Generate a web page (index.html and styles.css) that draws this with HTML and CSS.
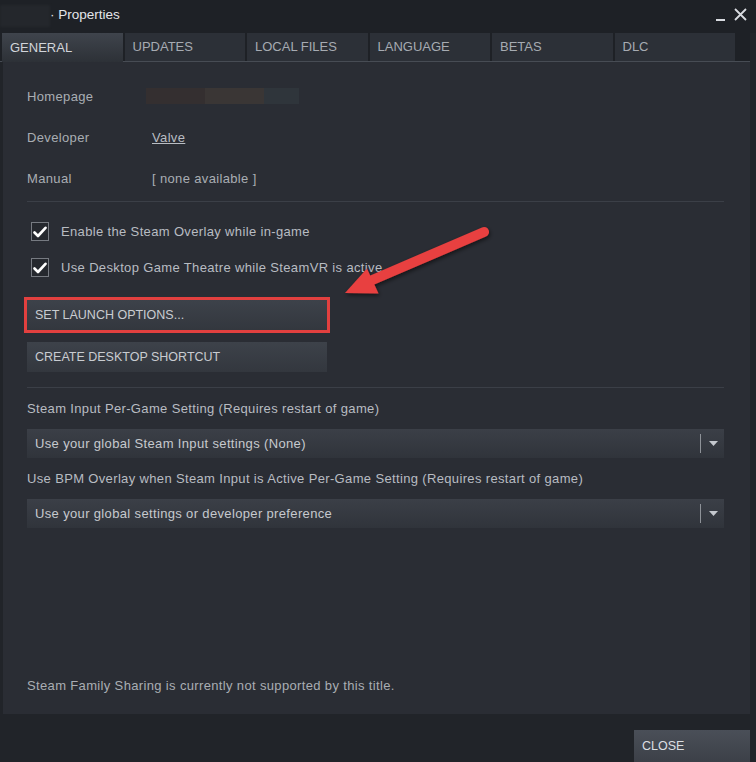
FILE: index.html
```html
<!DOCTYPE html>
<html lang="en">
<head>
<meta charset="utf-8">
<title>Properties</title>
<link rel="stylesheet" href="styles.css">
</head>
<body>
<div class="window">
  <div class="titlebar">
    <div class="game-name"></div>
    <span class="title">· Properties</span>
    <div class="controls">
      <span class="minimize"></span>
      <svg class="close-x" width="13" height="13" viewBox="0 0 13 13"><path d="M1 1 L12 12 M12 1 L1 12" stroke="#d8dbe0" stroke-width="1.8" fill="none"/></svg>
    </div>
  </div>
  <div class="tabs">
    <div class="tab active">GENERAL</div>
    <div class="tab">UPDATES</div>
    <div class="tab">LOCAL FILES</div>
    <div class="tab">LANGUAGE</div>
    <div class="tab">BETAS</div>
    <div class="tab">DLC</div>
  </div>
  <div class="panel">
    <div class="info">
      <div class="label">Homepage</div>
      <div class="value"><span class="blurred"><i class="b1"></i><i class="b2"></i><i class="b3"></i></span></div>
      <div class="label">Developer</div>
      <div class="value"><a class="link">Valve</a></div>
      <div class="label">Manual</div>
      <div class="value">[ none available ]</div>
    </div>
    <div class="sep"></div>
    <div class="checks">
      <label class="check-row"><span class="checkbox"><svg width="14" height="12" viewBox="0 0 14 12"><path d="M1.5 6.5 L5 10 L12.5 1.8" stroke="#ffffff" stroke-width="2.6" fill="none" stroke-linecap="round" stroke-linejoin="round"/></svg></span>Enable the Steam Overlay while in-game</label>
      <label class="check-row"><span class="checkbox"><svg width="14" height="12" viewBox="0 0 14 12"><path d="M1.5 6.5 L5 10 L12.5 1.8" stroke="#ffffff" stroke-width="2.6" fill="none" stroke-linecap="round" stroke-linejoin="round"/></svg></span>Use Desktop Game Theatre while SteamVR is active</label>
    </div>
    <div class="buttons">
      <div class="btn highlighted">SET LAUNCH OPTIONS...</div>
      <div class="btn">CREATE DESKTOP SHORTCUT</div>
    </div>
    <div class="sep sep2"></div>
    <div class="field-label">Steam Input Per-Game Setting (Requires restart of game)</div>
    <div class="dropdown"><span>Use your global Steam Input settings (None)</span><span class="dd-arrow"><i class="dd-bar"></i><svg width="9" height="5" viewBox="0 0 9 5"><path d="M0 0 H9 L4.5 5 Z" fill="#c4c8ce"/></svg></span></div>
    <div class="field-label">Use BPM Overlay when Steam Input is Active Per-Game Setting (Requires restart of game)</div>
    <div class="dropdown"><span>Use your global settings or developer preference</span><span class="dd-arrow"><i class="dd-bar"></i><svg width="9" height="5" viewBox="0 0 9 5"><path d="M0 0 H9 L4.5 5 Z" fill="#c4c8ce"/></svg></span></div>
    <div class="footer-note">Steam Family Sharing is currently not supported by this title.</div>
  </div>
  <div class="bottom">
    <div class="close-btn">CLOSE</div>
  </div>
  <svg class="annotation" width="756" height="762" viewBox="0 0 756 762">
    <defs>
      <filter id="shadow" x="-20%" y="-20%" width="140%" height="140%">
        <feDropShadow dx="1" dy="2" stdDeviation="2" flood-color="#000000" flood-opacity="0.55"/>
      </filter>
    </defs>
    <g filter="url(#shadow)">
      <line x1="484" y1="232" x2="370" y2="281" stroke="#e8403f" stroke-width="10" stroke-linecap="round"/>
      <polygon points="345,293 367,268.5 378.5,293.5" fill="#e8403f"/>
    </g>
  </svg>
</div>
</body>
</html>
```

FILE: styles.css
```css
* { box-sizing: border-box; }
html, body { margin: 0; padding: 0; }
body {
  background: #212429;
  font-family: "Liberation Sans", Arial, sans-serif;
  font-size: 13px;
  color: #b4b8be;
  width: 756px;
  height: 762px;
  overflow: hidden;
}
.window {
  position: relative;
  width: 756px;
  height: 762px;
  display: flex;
  flex-direction: column;
  background: #212429;
}
.titlebar {
  height: 33px;
  display: flex;
  align-items: center;
  background: #1e2126;
}
.game-name {
  width: 50px;
  height: 22px;
  background: #24272c;
  filter: blur(1px);
}
.title {
  color: #e4e6ea;
  font-size: 13.5px;
  padding-bottom: 3px;
}
.controls {
  margin-left: auto;
  display: flex;
  align-items: center;
  gap: 9px;
  padding-right: 9px;
  padding-bottom: 3px;
}
.minimize {
  width: 9px;
  height: 2px;
  background: #d8dbe0;
  margin-top: 10px;
}
.tabs {
  display: flex;
  gap: 2px;
  padding-left: 2px;
  height: 29px;
  background: linear-gradient(to bottom, #1e2126 0, #1e2126 28px, #474c54 28px, #474c54 29px);
  background-repeat: no-repeat;
  background-size: 750px 29px;
}
.tab {
  width: 120.5px;
  height: 28px;
  background: #2c3037;
  color: #a6abb2;
  font-size: 13px;
  padding-left: 8px;
  display: flex;
  align-items: center;
}
.tab.active {
  height: 29px;
  background: linear-gradient(to bottom, #3f444c, #2d3137);
  color: #d2d5da;
}
.panel {
  margin: 0 6px 0 3px;
  height: 655px;
  background: #2a2d34;
  padding: 14px 26px 0 24px;
  display: flex;
  flex-direction: column;
  letter-spacing: 0.35px;
}
.info {
  display: grid;
  grid-template-columns: 125px 1fr;
  grid-auto-rows: 41px;
  align-items: center;
}
.label { color: #a9adb3; }
.value { color: #a9adb3; }
.link {
  color: #b9bdc3;
  text-decoration: underline;
}
.blurred {
  display: flex;
  margin-left: -6px;
  height: 16px;
  width: 153px;
  filter: blur(0.6px);
}
.blurred i { display: block; height: 16px; }
.b1 { width: 59px; background: #342f30; }
.b2 { width: 59px; background: #3a3635; }
.b3 { width: 35px; background: #2f353b; }
.sep {
  height: 1px;
  background: #3b3f47;
  margin-top: 2px;
}
.checks {
  padding-top: 12px;
  display: flex;
  flex-direction: column;
}
.check-row {
  height: 36px;
  display: flex;
  align-items: center;
  color: #b8bcc2;
}
.checkbox {
  width: 18px;
  height: 19px;
  margin-left: 4px;
  margin-right: 12px;
  border: 1px solid #767a81;
  background: #25282e;
  display: flex;
  align-items: center;
  justify-content: center;
}
.buttons {
  margin-top: 14px;
  display: flex;
  flex-direction: column;
  gap: 12px;
  letter-spacing: 0;
}
.btn {
  width: 300px;
  height: 30px;
  background: linear-gradient(to bottom, #3d424a, #33373e);
  color: #c9ccd1;
  font-size: 12.5px;
  padding-left: 8px;
  display: flex;
  align-items: center;
}
.btn.highlighted {
  outline: 3px solid #e2403f;
  outline-offset: 0;
}
.sep2 {
  margin-top: 15px;
}
.field-label {
  height: 41px;
  display: flex;
  align-items: center;
  color: #b8bcc2;
}
.dropdown {
  height: 29px;
  background: linear-gradient(to bottom, #3b3f47, #30343b);
  color: #c6c9ce;
  padding-left: 8px;
  display: flex;
  align-items: center;
  justify-content: space-between;
}
.dd-arrow {
  display: flex;
  align-items: center;
  gap: 8px;
  padding-right: 6px;
}
.dd-bar {
  display: block;
  width: 1px;
  height: 19px;
  background: #8e9298;
}
.footer-note {
  margin-top: auto;
  margin-bottom: 21px;
  color: #a9adb3;
}
.bottom {
  flex: 1;
  display: flex;
  justify-content: flex-end;
  padding-top: 16px;
  padding-right: 6px;
}
.close-btn {
  width: 116px;
  height: 32px;
  background: linear-gradient(to bottom, #4a4f58, #3c4048);
  color: #dcdfe3;
  font-size: 12.5px;
  padding-left: 8px;
  display: flex;
  align-items: center;
}
.annotation {
  position: absolute;
  left: 0;
  top: 0;
  pointer-events: none;
}
```
